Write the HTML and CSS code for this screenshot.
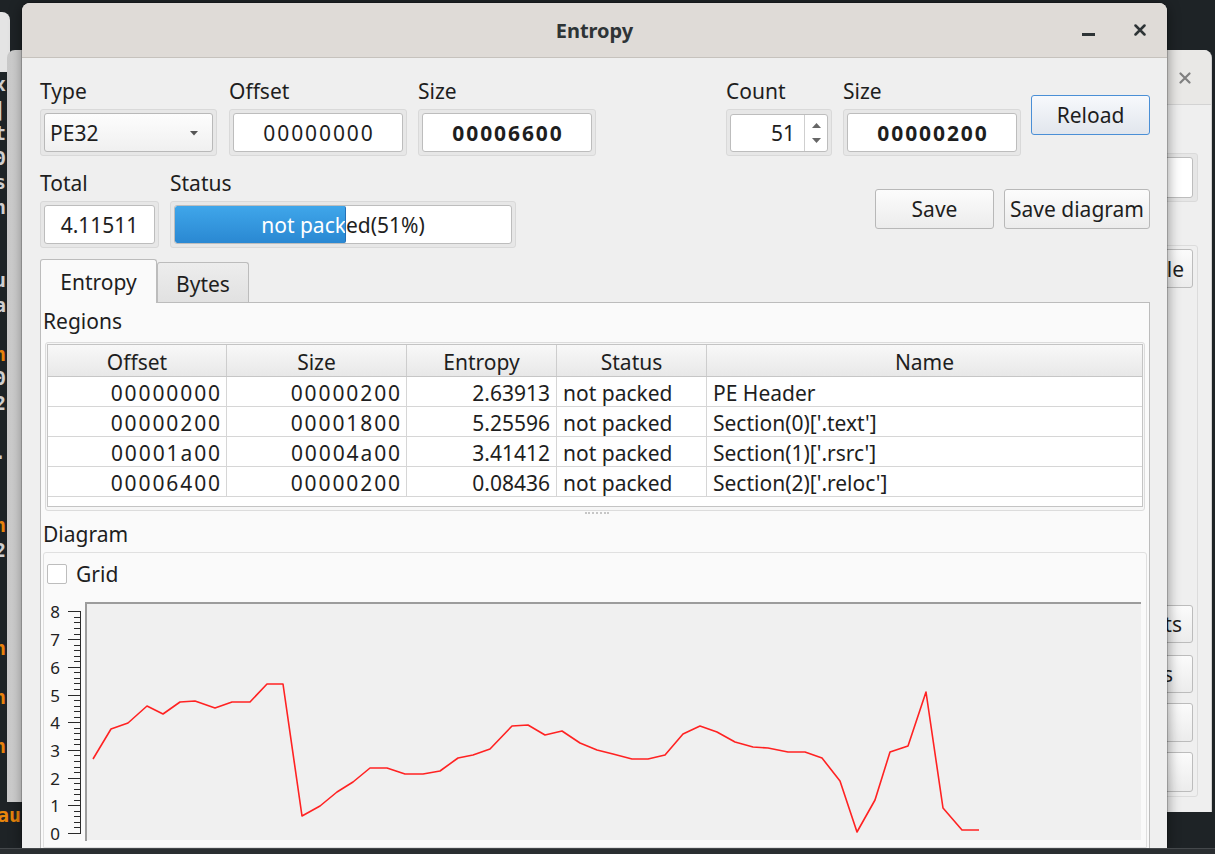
FILE: index.html
```html
<!DOCTYPE html>
<html lang="en">
<head>
<meta charset="utf-8">
<title>Entropy</title>
<link rel="stylesheet" href="styles.css">
</head>
<body>
<div class="desktop">
  <div class="bw-a"></div>
  <div class="term">
    <div class="term-lines">
      <span>x</span><span>|</span><span>t</span><span>0</span><span>s</span><span>n</span><span>&nbsp;</span><span>&nbsp;</span><span>u</span><span>a</span><span>&nbsp;</span><span class="or">n</span><span>0</span><span>2</span><span>&nbsp;</span><span>.</span><span>&nbsp;</span><span>&nbsp;</span><span class="or">n</span><span>2</span><span>&nbsp;</span><span>&nbsp;</span><span>&nbsp;</span><span class="or">n</span><span>&nbsp;</span><span class="or">n</span><span>&nbsp;</span><span class="or">n</span>
    </div>
  </div>
  <div class="bw-b"></div>
  <div class="term-aux">aux</div>

  <div class="bw-right">
    <div class="bwr-title">
      <svg class="bwr-close" width="12" height="12" viewBox="0 0 12 12"><path d="M1.5 1.5 L10.5 10.5 M10.5 1.5 L1.5 10.5" stroke="#808080" stroke-width="2.2" stroke-linecap="round"/></svg>
    </div>
    <div class="bwr-body">
      <div class="bwr-frame"><div class="bwr-edit"></div></div>
      <div class="bwr-group">
        <div class="bwr-btn b1">le</div>
        <div class="bwr-btn b2">ts</div>
        <div class="bwr-btn b3">s</div>
        <div class="bwr-btn b4"></div>
        <div class="bwr-btn b5"></div>
      </div>
    </div>
  </div>

  <div class="dialog">
    <div class="titlebar">
      <span class="title">Entropy</span>
      <svg class="wm-min" width="14" height="4" viewBox="0 0 14 4"><rect x="0" y="0" width="13" height="3" fill="#2e3436"/></svg>
      <svg class="wm-close" width="12" height="12" viewBox="0 0 12 12"><path d="M1.5 1.5 L10.5 10.5 M10.5 1.5 L1.5 10.5" stroke="#2e3436" stroke-width="2.5" stroke-linecap="round"/></svg>
    </div>
    <div class="body">
      <div class="row row-top">
        <div class="grp w177">
          <div class="lbl">Type</div>
          <div class="frame">
            <div class="combo"><span>PE32</span><svg class="combo-arrow" width="8" height="5" viewBox="0 0 8 5"><polygon points="0,0 8,0 4,4.5" fill="#555"/></svg></div>
          </div>
        </div>
        <div class="grp w178 ml12">
          <div class="lbl">Offset</div>
          <div class="frame"><div class="edit hex">00000000</div></div>
        </div>
        <div class="grp w178 ml11">
          <div class="lbl">Size</div>
          <div class="frame"><div class="edit hex bold">00006600</div></div>
        </div>
        <div class="spacer"></div>
        <div class="grp w106">
          <div class="lbl">Count</div>
          <div class="frame">
            <div class="spin">
              <span class="spin-val">51</span>
              <span class="spin-btns"><svg width="9" height="20" viewBox="0 0 9 20"><polygon points="0,5 4.5,0 9,5" fill="#666"/><polygon points="0,15 9,15 4.5,20" fill="#666"/></svg></span>
            </div>
          </div>
        </div>
        <div class="grp w178 ml11">
          <div class="lbl">Size</div>
          <div class="frame"><div class="edit hex bold">00000200</div></div>
        </div>
        <button class="btn btn-reload">Reload</button>
      </div>

      <div class="row row-second">
        <div class="grp w119">
          <div class="lbl">Total</div>
          <div class="frame"><div class="edit">4.11511</div></div>
        </div>
        <div class="grp w346 ml11">
          <div class="lbl">Status</div>
          <div class="frame">
            <div class="progress">
              <div class="pb-text">not packed(51%)</div>
              <div class="pb-fill" style="width:51%"><div class="pb-text pb-text-in">not packed(51%)</div></div>
            </div>
          </div>
        </div>
        <div class="spacer"></div>
        <button class="btn btn-save">Save</button>
        <button class="btn btn-savediag">Save diagram</button>
      </div>

      <div class="tabs">
        <div class="tab active">Entropy</div>
        <div class="tab">Bytes</div>
      </div>
      <div class="pane">
        <div class="plabel">Regions</div>
        <div class="tbl-frame">
          <div class="tbl">
            <div class="tr th"><div class="c">Offset</div><div class="c">Size</div><div class="c">Entropy</div><div class="c">Status</div><div class="c">Name</div></div>
            <div class="tr"><div class="c r hex">00000000</div><div class="c r hex">00000200</div><div class="c r">2.63913</div><div class="c">not packed</div><div class="c">PE Header</div></div>
            <div class="tr"><div class="c r hex">00000200</div><div class="c r hex">00001800</div><div class="c r">5.25596</div><div class="c">not packed</div><div class="c">Section(0)['.text']</div></div>
            <div class="tr"><div class="c r hex">00001a00</div><div class="c r hex">00004a00</div><div class="c r">3.41412</div><div class="c">not packed</div><div class="c">Section(1)['.rsrc']</div></div>
            <div class="tr"><div class="c r hex">00006400</div><div class="c r hex">00000200</div><div class="c r">0.08436</div><div class="c">not packed</div><div class="c">Section(2)['.reloc']</div></div>
          </div>
        </div>
        <div class="splitter"><span class="handle"></span></div>
        <div class="plabel">Diagram</div>
        <div class="diagram">
          <div class="check"><span class="box"></span><span>Grid</span></div>
          <svg class="chart" width="1102" height="252" viewBox="44 595 1102 252">
            <rect x="86" y="603" width="1055" height="238" fill="#f0f0f0"/>
            <line x1="85" y1="604" x2="1141" y2="604" stroke="#9c9c9c" stroke-width="2"/>
            <line x1="86" y1="603" x2="86" y2="842" stroke="#9c9c9c" stroke-width="2"/>
            <g stroke="#2a2a2a" stroke-width="1" shape-rendering="crispEdges" fill="none">
              <path d="M80.5 612 V835"/>
              <path d="M68 834.5h12 M68 806.5h12 M68 779.5h12 M68 751.5h12 M68 723.5h12 M68 696.5h12 M68 668.5h12 M68 640.5h12 M68 612.5h12"/>
              <path d="M74 828.5h6 M74 823.5h6 M74 817.5h6 M74 812.5h6 M74 801.5h6 M74 795.5h6 M74 790.5h6 M74 784.5h6 M74 773.5h6 M74 768.5h6 M74 762.5h6 M74 756.5h6 M74 745.5h6 M74 740.5h6 M74 734.5h6 M74 729.5h6 M74 718.5h6 M74 712.5h6 M74 707.5h6 M74 701.5h6 M74 690.5h6 M74 684.5h6 M74 679.5h6 M74 673.5h6 M74 662.5h6 M74 657.5h6 M74 651.5h6 M74 646.5h6 M74 635.5h6 M74 629.5h6 M74 623.5h6 M74 618.5h6"/>
            </g>
            <g class="ylab" text-anchor="middle" fill="#222">
              <text x="55" y="619">8</text>
              <text x="55" y="647">7</text>
              <text x="55" y="675">6</text>
              <text x="55" y="703">5</text>
              <text x="55" y="730">4</text>
              <text x="55" y="758">3</text>
              <text x="55" y="786">2</text>
              <text x="55" y="813">1</text>
              <text x="55" y="841">0</text>
            </g>
            <polyline fill="none" stroke="#ff2222" stroke-width="1.6" stroke-linejoin="round" points="93,760 111,730 128,724 147,707 163,715 180,703 195,702 215,709 232,703 250,703 267,685 283,685 302,817 320,807 337,793 353,783 370,769 387,769 405,775 423,775 440,772 458,759 473,756 490,750 512,727 528,726 545,736 562,732 580,744 597,751 613,755 632,760 648,760 665,756 683,735 700,727 717,733 735,743 753,748 768,749 788,753 805,753 822,759 840,782 857,833 875,801 890,753 908,747 926,693 943,809 962,831 979,831"/>
          </svg>
        </div>
      </div>
    </div>
  </div>
  <div class="taskbar"></div>
</div>
</body>
</html>
```

FILE: styles.css
```css
* { box-sizing: border-box; }
html, body { margin: 0; padding: 0; }
body {
  width: 1215px;
  height: 854px;
  overflow: hidden;
  background: #1e2326;
  font-family: "Noto Sans", "DejaVu Sans", sans-serif;
  font-size: 21px;
  color: #1e1e1e;
}
.desktop {
  position: relative;
  width: 1215px;
  height: 854px;
  overflow: hidden;
  background: #1e2326;
}

/* ---------- background windows ---------- */
.bw-a {
  position: absolute;
  left: -40px;
  top: 12px;
  width: 50px;
  height: 60px;
  background: #e4e4e4;
  border-radius: 0 8px 0 0;
}
.term {
  position: absolute;
  left: 0;
  top: 72px;
  width: 7px;
  height: 730px;
  overflow: hidden;
  background: #1d2326;
}
.term-lines {
  margin-left: -6px;
  font-family: "DejaVu Sans Mono", monospace;
  font-size: 20px;
  font-weight: bold;
  color: #cfcfcf;
}
.term-lines span { display: block; height: 24.5px; line-height: 24.5px; }
.term-lines .or { color: #e8820c; }
.bw-b {
  position: absolute;
  left: 7px;
  top: 50px;
  width: 60px;
  height: 752px;
  border-radius: 8px 0 0 0;
  background: linear-gradient(to right, #c9c9c9, #e2e2e2 40%, #d4d4d4);
}
.term-aux {
  position: absolute;
  left: -3px;
  top: 803px;
  font-family: "DejaVu Sans Mono", monospace;
  font-weight: bold;
  font-size: 20px;
  line-height: 24px;
  color: #e8850c;
}

.bw-right {
  position: absolute;
  left: 1100px;
  top: 50px;
  width: 112px;
  height: 762px;
  background: #efefef;
  border-radius: 0 8px 0 0;
  border-right: 1px solid #cfcfcf;
  overflow: hidden;
}
.bwr-title {
  position: relative;
  height: 55px;
  background: #e9e8e6;
  border-bottom: 1px solid #d3d3d3;
}
.bwr-close { position: absolute; left: 79px; top: 22px; }
.bwr-body {
  display: flex;
  flex-direction: column;
  align-items: flex-end;
  padding-right: 13px;
}
.bwr-frame {
  width: 98px;
  height: 49px;
  margin-top: 48px;
  border: 1px solid #dadada;
  border-radius: 3px;
  background: #e6e6e6;
  padding: 3px 4px 3px 3px;
}
.bwr-edit {
  height: 41px;
  border: 1px solid #bdbdbd;
  border-radius: 3px;
  background: #fff;
}
.bwr-group {
  width: 98px;
  height: 552px;
  margin-top: 43px;
  border: 1px solid #dcdcdc;
  border-radius: 3px;
  padding: 3px 4px 0 3px;
  display: flex;
  flex-direction: column;
}
.bwr-btn {
  flex: none;
  border: 1px solid #bcbcbc;
  border-radius: 3px;
  background: linear-gradient(#fbfbfb, #ececec);
  text-align: right;
  padding-right: 8px;
  font-size: 21px;
  color: #1e1e1e;
}
.bwr-btn.b1 { height: 39px; line-height: 38px; }
.bwr-btn.b2 { height: 38px; line-height: 37px; margin-top: 317px; padding-right: 10px; }
.bwr-btn.b3 { height: 38px; line-height: 37px; margin-top: 12px; padding-right: 19px; }
.bwr-btn.b4 { height: 39px; margin-top: 10px; }
.bwr-btn.b5 { height: 40px; margin-top: 10px; }

.taskbar {
  position: absolute;
  left: 0;
  right: 0;
  bottom: 0;
  height: 6px;
  background: #2a2e31;
  border-top: 1px solid #44484b;
}

/* ---------- dialog ---------- */
.dialog {
  position: absolute;
  left: 22px;
  top: 3px;
  width: 1145px;
  height: 845px;
  background: #efefef;
  border-radius: 8px 8px 0 0;
  overflow: hidden;
  display: flex;
  flex-direction: column;
  box-shadow: 0 2px 14px rgba(0, 0, 0, 0.45), 0 0 0 1px rgba(0, 0, 0, 0.18);
}
.titlebar {
  position: relative;
  flex: none;
  height: 55px;
  background: #dfdbd7;
  border-bottom: 1px solid #c6c2bd;
  display: flex;
  align-items: center;
  justify-content: center;
}
.title {
  font-size: 20px;
  font-weight: bold;
  color: #2e3436;
  line-height: 26px;
  padding-top: 1px;
}
.wm-min { position: absolute; left: 1060px; top: 30px; }
.wm-close { position: absolute; left: 1112px; top: 21px; }

.body {
  flex: 1;
  min-height: 0;
  display: flex;
  flex-direction: column;
  padding: 20px 17px 0 18px;
}

.row { display: flex; align-items: flex-start; flex: none; }
.row-second { margin-top: 14px; }
.spacer { flex: 1; }
.grp { flex: none; }
.w177 { width: 177px; }
.w178 { width: 178px; }
.w106 { width: 106px; }
.w119 { width: 119px; }
.w346 { width: 346px; }
.ml11 { margin-left: 11px; }
.ml12 { margin-left: 12px; }

.lbl {
  height: 28px;
  line-height: 27px;
  margin-bottom: 3px;
  white-space: nowrap;
}
.frame {
  height: 47px;
  border: 1px solid #d9d9d9;
  border-radius: 3px;
  background: #e7e7e7;
  padding: 3px;
}
.edit {
  height: 39px;
  border: 1px solid #bdbdbd;
  border-radius: 3px;
  background: #fff;
  text-align: center;
  line-height: 38px;
  white-space: nowrap;
}
.bold { font-weight: bold; }
.hex { letter-spacing: 1.9px; }
.edit.hex { padding-left: 2px; }

.combo {
  height: 39px;
  border: 1px solid #b9b9b9;
  border-radius: 3px;
  background: linear-gradient(#fdfdfd, #f0f0f0);
  display: flex;
  align-items: center;
  justify-content: space-between;
  padding: 1px 14px 0 5px;
  line-height: 37px;
}
.combo-arrow { display: block; }

.spin {
  height: 38px;
  margin-top: 1px;
  border: 1px solid #bdbdbd;
  border-radius: 3px;
  background: #fff;
  display: flex;
}
.spin-val {
  flex: 1;
  text-align: right;
  padding-right: 9px;
  line-height: 37px;
}
.spin-btns {
  width: 23px;
  border-left: 1px solid #cfcfcf;
  display: flex;
  align-items: center;
  justify-content: center;
}
.spin-btns svg { display: block; }

.btn {
  flex: none;
  font-family: inherit;
  font-size: 21px;
  color: #1e1e1e;
  height: 40px;
  padding: 0;
  border: 1px solid #b8b8b8;
  border-radius: 3px;
  background: linear-gradient(#fcfcfc, #ececec);
  line-height: 38px;
}
.btn-reload {
  width: 119px;
  margin-left: 10px;
  margin-top: 17px;
  border-color: #4a8fd6;
  background: linear-gradient(#f7f9fc, #e1e6ed);
}
.btn-save { width: 119px; margin-top: 19px; }
.btn-savediag { width: 146px; margin-left: 10px; margin-top: 19px; }

.progress {
  position: relative;
  height: 39px;
  border: 1px solid #bdbdbd;
  border-radius: 3px;
  background: #fff;
  overflow: hidden;
}
.pb-text {
  position: absolute;
  left: 0;
  top: 0;
  width: 336px;
  height: 37px;
  line-height: 38px;
  text-align: center;
  white-space: nowrap;
  color: #1e1e1e;
}
.pb-fill {
  position: absolute;
  left: 0;
  top: 0;
  bottom: 0;
  overflow: hidden;
  background: linear-gradient(#3fa6ea, #2a88d2);
  border-right: 1px solid #2470b6;
  border-radius: 2px;
}
.pb-text-in { color: #fff; }

/* ---------- tabs ---------- */
.tabs {
  position: relative;
  z-index: 1;
  flex: none;
  display: flex;
  align-items: flex-end;
  height: 43px;
  margin-top: 11px;
}
.tab {
  width: 92px;
  height: 40px;
  border: 1px solid #bcbcbc;
  border-bottom: none;
  border-radius: 3px 3px 0 0;
  background: linear-gradient(#ededed, #e1e1e1);
  text-align: center;
  line-height: 39px;
  padding-top: 2px;
}
.tab.active {
  width: 117px;
  height: 44px;
  margin-bottom: -1px;
  background: #fafafa;
  line-height: 41px;
}
.pane {
  flex: 1;
  min-height: 0;
  display: flex;
  flex-direction: column;
  border: 1px solid #bcbcbc;
  border-bottom: none;
  background: #fafafa;
  padding: 4px 2px 0 2px;
}
.plabel { flex: none; height: 28px; line-height: 29px; }

.tbl-frame {
  flex: none;
  width: 1100px;
  height: 169px;
  margin: 7px 0 0 2px;
  border: 1px solid #dcdcdc;
  border-radius: 3px;
  padding: 1px 1px 3px 1px;
  background: #f6f6f6;
}
.tbl {
  height: 100%;
  border: 1px solid #c4c4c4;
  background: #fff;
}
.tr {
  display: grid;
  grid-template-columns: 179px 180px 150px 150px 1fr;
  height: 30px;
  border-bottom: 1px solid #d6d6d6;
}
.tr.th {
  height: 32px;
  border-bottom: 1px solid #c6c6c6;
  background: linear-gradient(#f8f8f8, #e8e8e8);
}
.c {
  border-right: 1px solid #d6d6d6;
  line-height: 32px;
  padding: 0 6px;
  white-space: nowrap;
  overflow: hidden;
}
.c.hex { padding-right: 4px; }
.th .c {
  text-align: center;
  line-height: 34px;
  border-right-color: #cdcdcd;
}
.c:last-child { border-right: none; }
.r { text-align: right; }

.splitter {
  flex: none;
  height: 9px;
  padding-top: 1px;
  display: flex;
  justify-content: center;
}
.handle {
  width: 24px;
  height: 0;
  margin-left: 4px;
  border-top: 2px dotted #c6c6c6;
}

.diagram {
  flex: 1;
  min-height: 0;
  margin-top: 4px;
  border: 1px solid #e0e0e0;
  border-radius: 3px 3px 0 0;
  background: #fafafa;
  padding: 11px 0 0 3px;
  display: flex;
  flex-direction: column;
}
.check {
  flex: none;
  display: flex;
  align-items: center;
  height: 20px;
  line-height: 20px;
}
.box {
  width: 20px;
  height: 20px;
  border: 1px solid #bdbdbd;
  border-radius: 2px;
  background: #fff;
  margin-right: 9px;
}
.chart {
  display: block;
  flex: none;
  margin: 10px 0 0 -3px;
}
.ylab text {
  font-family: "Noto Sans", "DejaVu Sans", sans-serif;
  font-size: 17px;
}
```
